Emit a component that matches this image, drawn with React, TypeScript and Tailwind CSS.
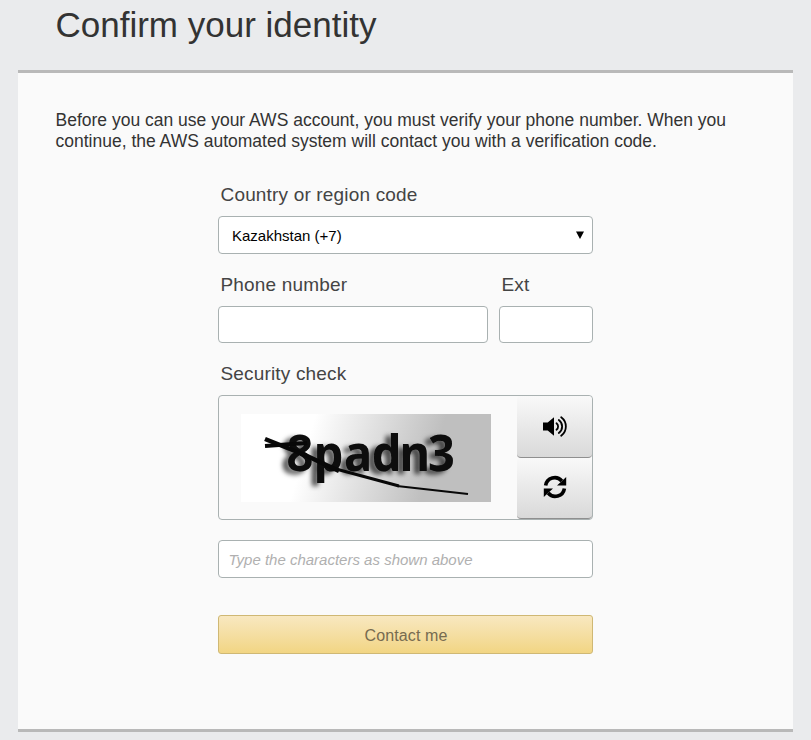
import React from "react";

const label = "pl-[2.5px] text-[19px] leading-[22px] tracking-[0.17px] text-[#444]";
const field = "rounded-[4px] border border-[#a9b1b1] bg-white outline-none";
const side =
  "flex w-[75px] items-center justify-center rounded-[4px] border-b border-[#8f8f8f] bg-gradient-to-b from-[#f9f9f9] to-[#d9d9d9] text-black";

function SpeakerIcon() {
  return (
    <svg width="26" height="22" viewBox="0 0 26 22" fill="none">
      <path d="M1 6.500h4.700L12 1.300v18.400l-6.300-5.200H1z" fill="#000" />
      <g stroke="#000" strokeWidth="1.800" strokeLinecap="round">
        <path d="M14.500 7.200a4.200 4.200 0 0 1 0 6.600" />
        <path d="M16.800 4a8 8 0 0 1 0 13" />
        <path d="M19.200 1.200a11.600 11.600 0 0 1 0 18.600" />
      </g>
    </svg>
  );
}

function RefreshIcon() {
  return (
    <svg className="-mt-[2px]" width="24" height="24" viewBox="0 0 24 24" fill="none">
      <g stroke="#000" strokeWidth="3.600">
        <path d="M2.600 10.500A9.200 9.200 0 0 1 18.800 6" />
        <path d="M21.400 13.500A9.200 9.200 0 0 1 5.200 18" />
      </g>
      <path d="M23.200 2v8.500H14zM.8 22v-8.500H10z" fill="#000" />
    </svg>
  );
}

export default function App() {
  return (
    <div className="h-[740px] w-[811px] overflow-hidden bg-[#eaebed] font-['Liberation_Sans',Arial,sans-serif]">
      <h1 className="h-[70px] pl-[55.5px] pt-[5px] text-[35px] leading-[40px] text-[#333]">
        Confirm your identity
      </h1>
      <main className="mx-[18px] h-[662px] w-[775px] border-y-[3px] border-[#b9b9b9] bg-[#fafafa] pt-[37px]">
        <p className="whitespace-nowrap pl-[37.5px] text-[17.5px] leading-[21px] text-[#333]">
          Before you can use your AWS account, you must verify your phone number. When you
          <br />
          continue, the AWS automated system will contact you with a verification code.
        </p>
        <form className="ml-[200px] mt-[32px] flex w-[375px] flex-col">
          <label className={label}>Country or region code</label>
          <div className={`mt-[10px] flex h-[38px] items-center justify-between pl-[13px] pr-[8px] text-[15px] text-black ${field}`}>
            <span className="pt-[2px]">Kazakhstan (+7)</span>
            <svg width="8" height="8" viewBox="0 0 8 8">
              <path d="M0 .5h8L4 8z" />
            </svg>
          </div>
          <div className="mt-[20px] flex gap-[11px]">
            <div className="flex w-[270px] flex-col">
              <label className={label}>Phone number</label>
              <input className={`mt-[10px] h-[37px] ${field}`} />
            </div>
            <div className="flex w-[94px] flex-col">
              <label className={label}>Ext</label>
              <input className={`mt-[10px] h-[37px] w-full ${field}`} />
            </div>
          </div>
          <label className={`mt-[20px] ${label}`}>Security check</label>
          <div className="mt-[10px] flex h-[125px] justify-between rounded-[4px] border border-[#a9b1b1] pl-[22px]">
            <svg className="mt-[18px]" width="250" height="88" viewBox="0 0 250 88">
              <defs>
                <linearGradient id="fade" gradientUnits="userSpaceOnUse" x1="75" y1="0" x2="195" y2="36">
                  <stop offset="0" stopColor="#fff" />
                  <stop offset="1" stopColor="#bfbfbf" />
                </linearGradient>
                <filter id="shade" x="-20%" y="-20%" width="140%" height="140%">
                  <feDropShadow dx="-6" dy="3" stdDeviation="2.500" floodColor="#000" floodOpacity="0.65" />
                </filter>
              </defs>
              <rect width="250" height="88" fill="url(#fade)" />
              <text
                transform="scale(0.94 1)"
                x="48.500 77.500 109.500 139 168.500 199"
                y="57.500"
                fontFamily="'Noto Sans', 'Open Sans', sans-serif"
                fontWeight="700"
                fontSize="50"
                fill="#080808"
                filter="url(#shade)"
              >
                8padn3
              </text>
              <g fill="none" stroke="#080808">
                <path d="M24 32 66 29" strokeWidth="4" />
                <path d="M24 25 64 41 98 57" strokeWidth="4.500" />
                <path d="M95 55 158 72" strokeWidth="3" />
                <path d="M156 72 227 80" strokeWidth="2" />
              </g>
            </svg>
            <div className="flex flex-col">
              <button type="button" aria-label="Play audio" className={`h-[62px] ${side}`}><SpeakerIcon /></button>
              <button type="button" aria-label="Refresh" className={`h-[61px] ${side}`}><RefreshIcon /></button>
            </div>
          </div>
          <input
            placeholder="Type the characters as shown above"
            className={`mt-[20px] h-[38px] px-[9.5px] text-[15px] italic placeholder:text-[#b0b0b0] ${field}`}
          />
          <button
            type="button"
            className="mt-[37px] h-[39px] rounded-[3px] border border-[#cfb874] bg-gradient-to-b from-[#f8e8c0] to-[#f2d583] pl-[1px] pt-[2px] text-[16px] tracking-[0.1px] text-[#776b50]"
          >
            Contact me
          </button>
        </form>
      </main>
    </div>
  );
}
